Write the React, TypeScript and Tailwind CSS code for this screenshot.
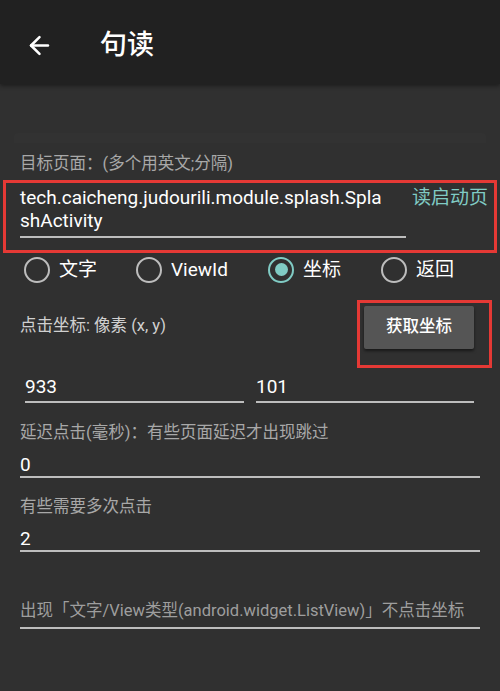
import { ArrowLeft } from "lucide-react";

const font = { fontFamily: 'Roboto, "Noto Sans CJK SC", sans-serif' };

function Radio({ label, checked }: { label: string; checked?: boolean }) {
  return (
    <div className="flex items-center gap-[9px]">
      <div
        className={
          "w-[26px] h-[26px] rounded-full border-[2.5px] flex items-center justify-center " +
          (checked ? "border-[#80cbc4]" : "border-[#bdbdbd]")
        }
      >
        {checked && <div className="w-[13px] h-[13px] rounded-full bg-[#80cbc4]" />}
      </div>
      <span className="text-[19px] text-white leading-none">{label}</span>
    </div>
  );
}

export default function App() {
  return (
    <div className="w-[500px] h-[691px] bg-[#303030] overflow-hidden" style={font}>
      <div className="h-[84px] bg-[#212121] flex items-center pt-[6px] shadow-[0_2px_4px_rgba(0,0,0,0.4)]">
        <ArrowLeft className="ml-[25px] w-[29px] h-[29px] text-white" strokeWidth={2.1} />
        <h1 className="ml-[46px] text-[27px] text-white font-medium">句读</h1>
      </div>

      <div className="mt-[49px] mx-[14px] h-[10px] bg-[#323232] rounded-t-sm" />

      <div className="-mt-[10px]">
        <p className="mt-[23px] pl-[20px] text-[16.5px] text-[#a8a8a8] leading-none">
          目标页面：(多个用英文;分隔)
        </p>

        <div className="mt-[7px] mx-[3px] h-[73px] border-[3px] border-[#e53935] flex pl-[14px] pr-[8px] pt-[3px]">
          <div className="w-[386px] shrink-0">
            <div className="text-[19px] text-white leading-[23px] whitespace-nowrap">
              tech.caicheng.judourili.module.splash.Spla
              <br />
              shActivity
            </div>
            <div className="mt-[4px] h-[2px] bg-[#bdbdbd]" />
          </div>
          <span className="ml-[6px] text-[19px] text-[#80cbc4] leading-[23px] whitespace-nowrap">读启动页</span>
        </div>

        <div className="mt-[1px] h-[32px] flex items-center pl-[24px]">
          <div className="w-[112px]"><Radio label="文字" /></div>
          <div className="w-[132px]"><Radio label="ViewId" /></div>
          <div className="w-[113px]"><Radio label="坐标" checked /></div>
          <Radio label="返回" />
        </div>

        <div className="mt-[14px] flex items-start">
          <p className="pl-[20px] mt-[18px] text-[16.5px] text-[#d0d0d0] leading-none flex-1">
            点击坐标: 像素 (x, y)
          </p>
          <div className="mr-[8px] w-[135px] h-[68px] border-[3px] border-[#e53935] pl-[4px] pt-[3px]">
            <div className="w-[110px] h-[43px] bg-[#555555] rounded-[2px] shadow-[0_2px_3px_rgba(0,0,0,0.5)] flex items-center justify-center text-[16.5px] text-white font-medium">
              获取坐标
            </div>
          </div>
        </div>

        <div className="mt-[8px] flex pl-[25px] gap-[12px]">
          <div className="w-[219px]">
            <div className="text-[19px] text-white leading-[22px]">933</div>
            <div className="mt-[3px] h-[2px] bg-[#bdbdbd]" />
          </div>
          <div className="w-[218px]">
            <div className="text-[19px] text-white leading-[22px]">101</div>
            <div className="mt-[3px] h-[2px] bg-[#bdbdbd]" />
          </div>
        </div>

        <div className="px-[20px]">
          <p className="mt-[22px] text-[16.5px] text-[#a8a8a8] leading-none">
            延迟点击(毫秒)：有些页面延迟才出现跳过
          </p>
          <div className="mt-[13px] text-[19px] text-white leading-[22px]">0</div>
          <div className="h-[2px] bg-[#bdbdbd]" />

          <p className="mt-[21px] text-[16.5px] text-[#a8a8a8] leading-none">有些需要多次点击</p>
          <div className="mt-[12px] text-[19px] text-white leading-[22px]">2</div>
          <div className="h-[2px] bg-[#bdbdbd]" />

          <p className="mt-[51px] text-[16.5px] text-[#9e9e9e] leading-none whitespace-nowrap">
            出现「文字/View类型(android.widget.ListView)」不点击坐标
          </p>
          <div className="mt-[8px] h-[2px] bg-[#bdbdbd]" />
        </div>
      </div>
    </div>
  );
}
